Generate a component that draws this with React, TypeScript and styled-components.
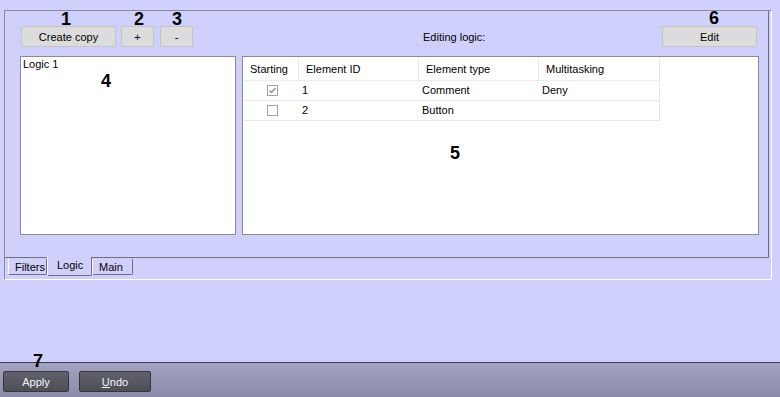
import React from "react";
import styled, { createGlobalStyle } from "styled-components";

const GlobalStyle = createGlobalStyle`
  html, body {
    margin: 0;
    padding: 0;
    background: #d0d0fc;
  }
  body {
    font-family: "Liberation Sans", Arial, sans-serif;
    font-size: 11px;
    color: #000;
  }
`;

// ---------------------------------------------------------------
//            layout
// ---------------------------------------------------------------

const Screen = styled.div`
  width: 780px;
  height: 397px;
  display: flex;
  flex-direction: column;
  position: relative;
  overflow: hidden;
`;

const TabControl = styled.div`
  margin: 10px 0 0 4px;
  width: 764px;
  height: 268px;
  padding-right: 2px;
  border-top: 1px solid #8a8a9a;
  border-left: 1px solid #8a8a9a;
  border-right: 1px solid #ffffff;
  border-bottom: 1px solid #ffffff;
  display: flex;
  flex-direction: column;
`;

const TabPage = styled.div`
  height: 246px;
  border-right: 1px solid #6e6e80;
  border-bottom: 1px solid #6e6e80;
  display: flex;
  flex-direction: column;
  position: relative;
`;

const Toolbar = styled.div`
  margin-top: 15px;
  padding: 0 11px 0 16px;
  height: 21px;
  display: flex;
  align-items: center;
`;

const ButtonSlot = styled.div<{ $gap?: number }>`
  position: relative;
  margin-left: ${(p) => p.$gap ?? 0}px;
  display: flex;
`;

const ToolButton = styled.button<{ $w: number }>`
  width: ${(p) => p.$w}px;
  height: 21px;
  padding: 0;
  background: #dcdcdc;
  border: 1px solid #c4c4c4;
  border-radius: 1px;
  font-family: "Liberation Sans", Arial, sans-serif;
  font-size: 11px;
  color: #000;
`;

const EditingLabel = styled.span`
  margin-left: 230px;
  flex: 1;
`;

const Callout = styled.span<{ $x: number; $y: number }>`
  position: absolute;
  left: ${(p) => p.$x}px;
  top: ${(p) => p.$y}px;
  font-family: "Liberation Sans", Arial, sans-serif;
  font-size: 18px;
  font-weight: bold;
  line-height: 1;
  color: #000;
  pointer-events: none;
`;

const PanelRow = styled.div`
  margin-top: 9px;
  padding: 0 9px 0 15px;
  display: flex;
  gap: 6px;
`;

const ListPanel = styled.div`
  width: 216px;
  height: 179px;
  box-sizing: border-box;
  background: #fff;
  border: 1px solid #8a8a98;
  padding: 1px 2px;
`;

const ListItem = styled.div`
  line-height: 13px;
`;

const GridPanel = styled.div`
  flex: 1;
  height: 179px;
  box-sizing: border-box;
  background: #fff;
  border: 1px solid #8a8a98;
  padding: 1px 0 0 1px;
`;

const Grid = styled.div`
  width: 416px;
  display: grid;
  grid-template-columns: 55px 120px 120px 121px;
`;

const HeadCell = styled.div`
  height: 22px;
  line-height: 22px;
  padding-left: 7px;
  border-right: 1px solid #e6e6ea;
  border-bottom: 1px solid #ececf0;
  &:first-child {
    padding-left: 6px;
  }
`;

const Cell = styled.div<{ $center?: boolean; $last?: boolean }>`
  height: 19px;
  line-height: 19px;
  padding-left: 3px;
  border-bottom: 1px solid #e6e6ea;
  border-right: 1px solid ${(p) => (p.$last ? "#e6e6ea" : "transparent")};
  display: flex;
  align-items: center;
  justify-content: ${(p) => (p.$center ? "center" : "flex-start")};
`;

const CheckBox = styled.span`
  width: 9px;
  height: 9px;
  border: 1px solid #a0a0a8;
  background: #fff;
  display: inline-flex;
  align-items: center;
  justify-content: center;
`;

const TabStrip = styled.div`
  height: 20px;
  display: flex;
  align-items: flex-start;
  padding-left: 3px;
`;

const Tab = styled.div<{ $active?: boolean; $w: number }>`
  width: ${(p) => p.$w}px;
  height: ${(p) => (p.$active ? 19 : 16)}px;
  margin-top: ${(p) => (p.$active ? -1 : 1)}px;
  box-sizing: border-box;
  padding-left: ${(p) => (p.$active ? 9 : 6)}px;
  line-height: ${(p) => (p.$active ? 17 : 16)}px;
  background: #d0d0fc;
  border-left: 1px solid #ffffff;
  border-right: 1px solid #6e6e80;
  border-bottom: 1px solid #6e6e80;
  border-radius: 0 0 2px 2px;
  z-index: ${(p) => (p.$active ? 1 : 0)};
`;

const Filler = styled.div`
  flex: 1;
`;

const BottomBar = styled.div`
  height: 35px;
  border-top: 1px solid #3c3c48;
  background: linear-gradient(#a4a4c2, #8a8aa8);
  display: flex;
  align-items: flex-start;
  padding: 8px 0 0 3px;
  box-sizing: border-box;
  gap: 10px;
  position: relative;
`;

const BarButton = styled.button<{ $w: number }>`
  width: ${(p) => p.$w}px;
  height: 21px;
  padding: 0;
  background: linear-gradient(#62626e, #4e4e58);
  border: 1px solid #35353f;
  border-radius: 2px;
  font-family: "Liberation Sans", Arial, sans-serif;
  font-size: 11px;
  color: #f4f4f8;
`;

const Underline = styled.span`
  text-decoration: underline;
`;

const Check = () => (
  <svg width="9" height="9" viewBox="0 0 9 9">
    <path d="M1.5 4.5 L3.5 6.5 L7.5 2" fill="none" stroke="#8a8a90" strokeWidth="1.3" />
  </svg>
);

const rows = [
  { checked: true, id: "1", type: "Comment", multi: "Deny" },
  { checked: false, id: "2", type: "Button", multi: "" },
];

export default function App() {
  return (
    <Screen>
      <GlobalStyle />
      <TabControl>
        <TabPage>
          <Toolbar>
            <ButtonSlot>
              <ToolButton $w={95}>Create copy</ToolButton>
              <Callout $x={40} $y={-16}>1</Callout>
            </ButtonSlot>
            <ButtonSlot $gap={5}>
              <ToolButton $w={33}>+</ToolButton>
              <Callout $x={13} $y={-16}>2</Callout>
            </ButtonSlot>
            <ButtonSlot $gap={6}>
              <ToolButton $w={33}>-</ToolButton>
              <Callout $x={12} $y={-16}>3</Callout>
            </ButtonSlot>
            <EditingLabel>Editing logic:</EditingLabel>
            <ButtonSlot>
              <ToolButton $w={95}>Edit</ToolButton>
              <Callout $x={47} $y={-17}>6</Callout>
            </ButtonSlot>
          </Toolbar>
          <PanelRow>
            <ListPanel>
              <ListItem>Logic 1</ListItem>
            </ListPanel>
            <GridPanel>
              <Grid>
                <HeadCell>Starting</HeadCell>
                <HeadCell>Element ID</HeadCell>
                <HeadCell>Element type</HeadCell>
                <HeadCell>Multitasking</HeadCell>
                {rows.map((r) => (
                  <React.Fragment key={r.id}>
                    <Cell $center>
                      <CheckBox>{r.checked && <Check />}</CheckBox>
                    </Cell>
                    <Cell>{r.id}</Cell>
                    <Cell>{r.type}</Cell>
                    <Cell $last>{r.multi}</Cell>
                  </React.Fragment>
                ))}
              </Grid>
            </GridPanel>
          </PanelRow>
          <Callout $x={96} $y={61}>4</Callout>
          <Callout $x={445} $y={133}>5</Callout>
        </TabPage>
        <TabStrip>
          <Tab $w={39}>Filters</Tab>
          <Tab $w={45} $active>Logic</Tab>
          <Tab $w={41}>Main</Tab>
        </TabStrip>
      </TabControl>
      <Filler />
      <BottomBar>
        <BarButton $w={66}>Apply</BarButton>
        <BarButton $w={72}>
          <Underline>U</Underline>ndo
        </BarButton>
        <Callout $x={33} $y={-11}>7</Callout>
      </BottomBar>
    </Screen>
  );
}
